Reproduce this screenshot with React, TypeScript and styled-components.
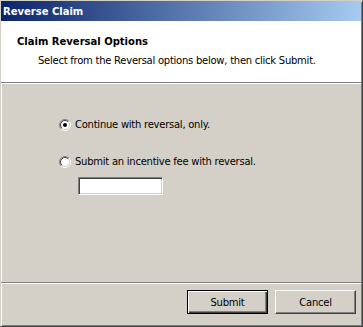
import React from "react";
import styled, { createGlobalStyle } from "styled-components";

const Global = createGlobalStyle`
  html, body { margin: 0; padding: 0; background: #d4d0c8; }
  body { font-family: "DejaVu Sans", "Liberation Sans", sans-serif; font-size: 10px; color: #000; }
  * { box-sizing: border-box; }
`;

const Window = styled.div`
  width: 363px;
  height: 327px;
  display: flex;
  flex-direction: column;
  background: #d4d0c8;
  border-style: solid;
  border-width: 1px;
  border-color: #d4d0c8 #404040 #404040 #d4d0c8;
  box-shadow: inset 1px 1px #ffffff, inset -1px -1px #808080;
  padding: 0 1px 1px 0;
`;

const TitleBar = styled.div`
  height: 20px;
  flex: none;
  display: flex;
  align-items: center;
  padding-left: 2px;
  background: linear-gradient(to right, #0a246a, #a6caf0);
  color: #fff;
  font-weight: bold;
  font-size: 10px;
`;

const Header = styled.div`
  height: 61px;
  flex: none;
  background: #fff;
  padding: 15px 0 0 16px;
  display: flex;
  flex-direction: column;
  line-height: 12px;
`;

const HeaderTitle = styled.div`
  font-weight: bold;
`;

const HeaderText = styled.div`
  margin-top: 7px;
  padding-left: 21px;
  letter-spacing: -0.25px;
`;

const Separator = styled.div`
  height: 2px;
  flex: none;
  border-top: 1px solid #808080;
  border-bottom: 1px solid #ffffff;
`;

const Body = styled.div`
  flex: 1;
  padding: 34px 0 0 58px;
  display: flex;
  flex-direction: column;
`;

const RadioRow = styled.label<{ $gap?: number }>`
  display: flex;
  align-items: center;
  gap: 4px;
  height: 13px;
  line-height: 13px;
  margin-top: ${(p) => p.$gap ?? 0}px;
  letter-spacing: -0.25px;
  cursor: default;
`;

const RadioIcon = styled.svg`
  width: 12px;
  height: 12px;
  flex: none;
`;

const TextBox = styled.div`
  margin: 9px 0 0 19px;
  width: 85px;
  height: 18px;
  background: #fff;
  border-style: solid;
  border-width: 1px;
  border-color: #808080 #ffffff #ffffff #808080;
  box-shadow: inset 1px 1px #404040, inset -1px -1px #d4d0c8;
`;

const Footer = styled.div`
  height: 41px;
  flex: none;
  display: flex;
  justify-content: flex-end;
  gap: 7px;
  padding: 6px 5px 0 0;
`;

const Button = styled.button<{ $default?: boolean }>`
  width: 81px;
  height: 24px;
  font-family: inherit;
  font-size: 10px;
  letter-spacing: -0.25px;
  color: #000;
  background: #d4d0c8;
  padding: 0;
  border-style: solid;
  border-width: 1px;
  border-color: ${(p) => (p.$default ? "#000 #000 #000 #000" : "#ffffff #404040 #404040 #ffffff")};
  box-shadow: ${(p) =>
    p.$default
      ? "inset 1px 1px #ffffff, inset -1px -1px #404040, inset -2px -2px #808080"
      : "inset -1px -1px #808080"};
`;

const Radio: React.FC<{ checked?: boolean }> = ({ checked }) => (
  <RadioIcon viewBox="0 0 12 12">
    <circle cx="6" cy="6" r="4.5" fill="#fff" />
    <path d="M2.111 9.889 A5.5 5.5 0 0 1 9.889 2.111" fill="none" stroke="#808080" />
    <path d="M9.889 2.111 A5.5 5.5 0 0 1 2.111 9.889" fill="none" stroke="#ffffff" />
    <path d="M2.818 9.182 A4.5 4.5 0 0 1 9.182 2.818" fill="none" stroke="#404040" />
    <path d="M9.182 2.818 A4.5 4.5 0 0 1 2.818 9.182" fill="none" stroke="#d4d0c8" />
    {checked && <circle cx="6" cy="6" r="2" fill="#000" />}
  </RadioIcon>
);

export default function App() {
  return (
    <>
      <Global />
      <Window>
        <TitleBar>Reverse Claim</TitleBar>
        <Header>
          <HeaderTitle>Claim Reversal Options</HeaderTitle>
          <HeaderText>Select from the Reversal options below, then click Submit.</HeaderText>
        </Header>
        <Separator />
        <Body>
          <RadioRow>
            <Radio checked />
            Continue with reversal, only.
          </RadioRow>
          <RadioRow $gap={24}>
            <Radio />
            Submit an incentive fee with reversal.
          </RadioRow>
          <TextBox />
        </Body>
        <Separator />
        <Footer>
          <Button $default>Submit</Button>
          <Button>Cancel</Button>
        </Footer>
      </Window>
    </>
  );
}
